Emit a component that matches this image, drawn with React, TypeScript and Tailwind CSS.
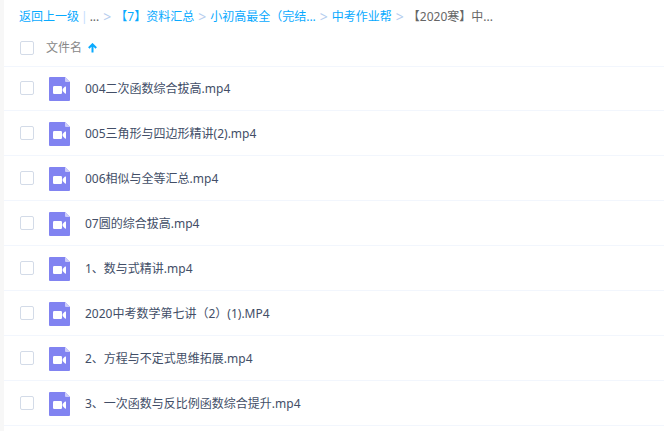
import { Fragment } from 'react';

const files = [
  '004二次函数综合拔高.mp4',
  '005三角形与四边形精讲(2).mp4',
  '006相似与全等汇总.mp4',
  '07圆的综合拔高.mp4',
  '1、数与式精讲.mp4',
  '2020中考数学第七讲（2）(1).MP4',
  '2、方程与不定式思维拓展.mp4',
  '3、一次函数与反比例函数综合提升.mp4',
];

const folders = ['【7】资料汇总', '小初高最全（完结...', '中考作业帮'];

const checkboxClass =
  'size-[14px] shrink-0 appearance-none rounded-xs border border-[#d3dbe8] bg-white checked:bg-[#09aaff]';

function VideoIcon() {
  return (
    <svg width="21" height="24" viewBox="0 0 21 24" className="shrink-0" aria-hidden="true">
      <path d="M1 0H16L21 5V23a1 1 0 0 1-1 1H1a1 1 0 0 1-1-1V1a1 1 0 0 1 1-1Z" fill="#8183f1" />
      <path d="M16 0L21 5H17a1 1 0 0 1-1-1Z" fill="#cdcdfa" />
      <rect x="4" y="9" width="9" height="8" rx="1.2" fill="#fff" />
      <path d="M13.6 12L16 9.6Q17 9 17 10V16Q17 17 16 16.4L13.6 14Z" fill="#fff" />
    </svg>
  );
}

function Separator() {
  return <span className="mx-1 w-2 text-center text-sm text-[#b5cdee]">&gt;</span>;
}

export default function App() {
  return (
    <div className="min-h-screen border-l-4 border-[#f7f7f7] bg-white font-['Noto_Sans','Noto_Sans_CJK_SC',sans-serif] text-xs text-[#424e67]">
      {/* Breadcrumb */}
      <nav className="flex h-[33px] items-center pl-[15px] whitespace-nowrap text-[#09aaff]">
        <a href="#back">返回上一级</a>
        <span className="mx-0.5 text-[#c4dbfe]">|</span>
        <span className="text-[#666666]">...</span>
        <Separator />
        {folders.map((folder) => (
          <Fragment key={folder}>
            <a href="#folder">{folder}</a>
            <Separator />
          </Fragment>
        ))}
        <span className="text-[#666666]">【2020寒】中...</span>
      </nav>

      {/* Column header */}
      <div className="flex h-[33px] items-center pb-1 pl-4">
        <input type="checkbox" aria-label="全选" className={checkboxClass} />
        <button type="button" className="ml-3 flex items-center gap-1.5 text-[#888888]">
          文件名
          <svg width="9" height="10" viewBox="0 0 9 10" fill="none" stroke="#09aaff" strokeWidth="2" aria-hidden="true">
            <path d="M4.5 9.5V1.5M0.8 5L4.5 1.3L8.2 5" />
          </svg>
        </button>
      </div>

      {/* Files */}
      <ul>
        {files.map((name) => (
          <li
            key={name}
            className="flex h-[45px] items-center border-b border-[#f2f6fd] pt-0.5 pl-4 first:border-t first:pt-0"
          >
            <input type="checkbox" aria-label={name} className={`${checkboxClass} mr-[15px] mb-0.5`} />
            <VideoIcon />
            <a href="#file" className="ml-[15px] whitespace-nowrap">
              {name}
            </a>
          </li>
        ))}
      </ul>
    </div>
  );
}
